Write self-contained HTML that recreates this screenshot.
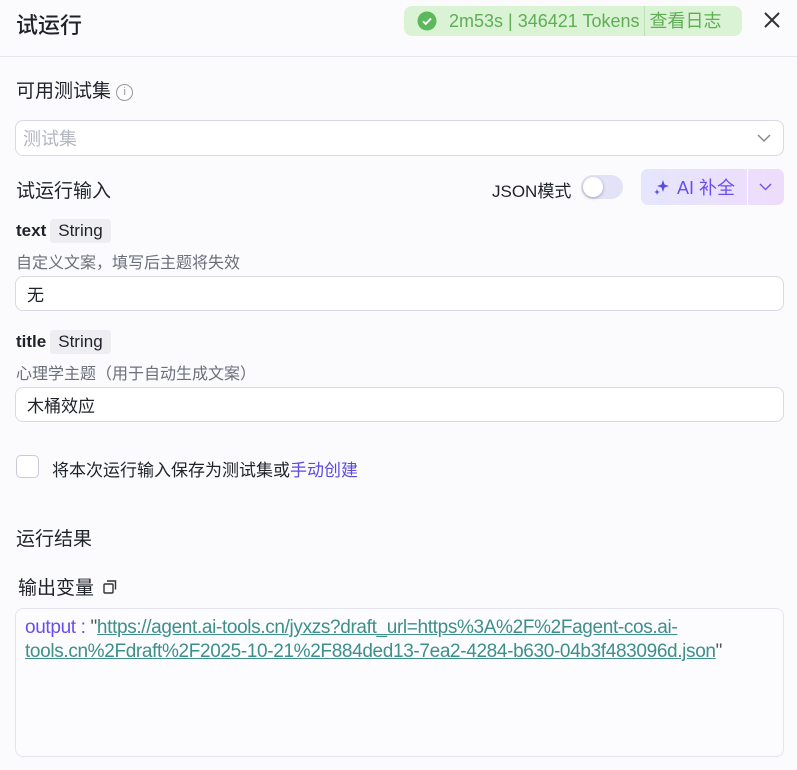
<!DOCTYPE html>
<html><head><meta charset="utf-8"><style>
*{box-sizing:border-box;margin:0;padding:0}
body{width:797px;height:770px;background:#fbfbfe;font-family:"Liberation Sans","Noto Sans CJK SC",sans-serif;color:#1f2329;position:relative;overflow:hidden}
.a{position:absolute;white-space:nowrap}
.inp{position:absolute;left:15px;width:769px;border:1px solid #d9d9e3;border-radius:8px;background:#fff;font-size:17px;padding-left:11px;display:flex;align-items:center}
.tag{display:inline-block;background:#ededf2;border-radius:4px;padding:0 8px;font-size:17px;font-weight:normal;margin-left:4px;height:24px;line-height:24px;color:#1f2329}
.lbl{font-size:17px;font-weight:bold}
.desc{font-size:16px;color:#6b6f7a}
</style></head><body>
<div class="a" style="left:16px;top:8px;font-size:22px;font-weight:500">试运行</div>
<div class="a" style="left:404px;top:6px;width:338px;height:30px;background:#d9f3d4;border-radius:8px;display:flex;align-items:center;color:#5fae56;font-size:18px;line-height:30px">
 <svg width="20" height="20" style="margin-left:13px;flex:none" viewBox="0 0 20 20"><circle cx="10" cy="10" r="9.5" fill="#5cb85c"/><path d="M6 10.3l2.7 2.6L14 7.6" stroke="#fff" stroke-width="2" fill="none"/></svg>
 <span style="margin-left:12px">2m53s | 346421 Tokens</span>
 <span style="border-left:1px solid #bfe3b8;height:30px;margin-left:5px"></span>
 <span style="margin-left:4px">查看日志</span>
</div>
<svg class="a" style="left:762px;top:10px" width="20" height="20" viewBox="0 0 20 20"><path d="M3 3l14 14M17 3L3 17" stroke="#333" stroke-width="2"/></svg>
<div class="a" style="left:0;top:56px;width:797px;height:1px;background:#e6e6ee"></div>
<div class="a" style="left:16px;top:76px;font-size:19px">可用测试集 <span style="display:inline-block;width:17px;height:17px;border:1.5px solid #999;border-radius:50%;font-size:11px;text-align:center;line-height:14px;color:#999;vertical-align:2px">i</span></div>
<div class="inp" style="top:120px;height:36px;color:#b4b6bf;font-size:18px;padding-left:7px">测试集<svg style="position:absolute;right:12px;top:13px" width="14" height="9"><path d="M1 1l6 6 6-6" stroke="#888" stroke-width="1.5" fill="none"/></svg></div>
<div class="a" style="left:16px;top:176px;font-size:19px">试运行输入</div>
<div class="a" style="left:492px;top:177px;font-size:17px">JSON模式</div>
<div class="a" style="left:581px;top:175px;width:42px;height:24px;background:#e2e3f7;border-radius:12px"><div style="position:absolute;left:2px;top:2px;width:20px;height:20px;background:#fff;border-radius:50%;box-shadow:0 1px 3px rgba(0,0,0,.3)"></div></div>
<div class="a" style="left:641px;top:169px;width:143px;height:36px;border-radius:7px;background:linear-gradient(90deg,#e5e6fd,#eedcfb);display:flex;align-items:center;color:#6a4df0;font-size:18px">
 <svg width="18" height="18" style="margin-left:12px" viewBox="0 0 18 18"><path d="M10 2l1.5 4.5L16 8l-4.5 1.5L10 14 8.5 9.5 4 8l4.5-1.5z" fill="#5b4ae8"/><path d="M4 11l.8 2.2L7 14l-2.2.8L4 17l-.8-2.2L1 14l2.2-.8z" fill="#5b4ae8"/></svg>
 <span style="margin-left:6px">AI 补全</span>
 <span style="position:absolute;left:106px;top:0;width:1px;height:36px;background:#fff"></span>
 <svg style="position:absolute;left:118px;top:14px" width="13" height="8"><path d="M1 1l5.5 5.5L12 1" stroke="#7b52ee" stroke-width="1.5" fill="none"/></svg>
</div>
<div class="a lbl" style="left:16px;top:219px">text<span class="tag">String</span></div>
<div class="a desc" style="left:16px;top:249px">自定义文案，填写后主题将失效</div>
<div class="inp" style="top:276px;height:35px">无</div>
<div class="a lbl" style="left:16px;top:330px">title<span class="tag">String</span></div>
<div class="a desc" style="left:16px;top:360px">心理学主题（用于自动生成文案）</div>
<div class="inp" style="top:387px;height:35px">木桶效应</div>
<div class="a" style="left:16px;top:455px;width:23px;height:23px;border:1.5px solid #c9cad3;border-radius:5px;background:#fff"></div>
<div class="a" style="left:52px;top:456px;font-size:17px">将本次运行输入保存为测试集或<span style="color:#5a4ae0">手动创建</span></div>
<div class="a" style="left:16px;top:524px;font-size:19px">运行结果</div>
<div class="a" style="left:18px;top:573px;font-size:19px">输出变量 <svg width="14" height="14" style="margin-left:4px" viewBox="0 0 14 14"><rect x="1" y="4" width="9" height="9" rx="1" stroke="#333" stroke-width="1.4" fill="none"/><path d="M4 1h8.5v8.5" stroke="#333" stroke-width="1.4" fill="none"/></svg></div>
<div class="a" style="left:15px;top:608px;width:769px;height:149px;border:1px solid #e4e4ec;border-radius:8px;background:#fcfcff"></div>
<div class="a" style="left:25px;top:616px;font-size:19px;line-height:24px;letter-spacing:-0.35px;color:#3d8f8a"><span style="color:#6a4df0">output : </span><span style="color:#555">"</span><u>https://agent.ai-tools.cn/jyxzs?draft_url=https%3A%2F%2Fagent-cos.ai-</u><br><u>tools.cn%2Fdraft%2F2025-10-21%2F884ded13-7ea2-4284-b630-04b3f483096d.json</u><span style="color:#555">"</span></div>
</body></html>
